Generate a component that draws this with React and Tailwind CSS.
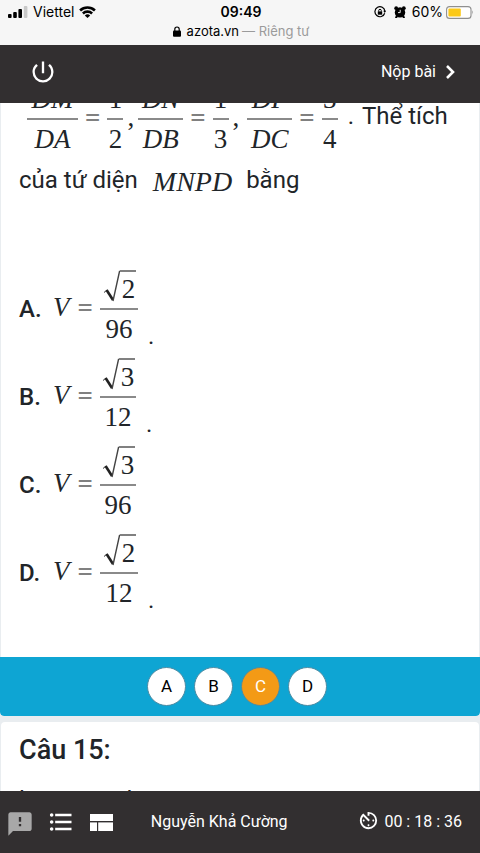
import { MdPowerSettingsNew, MdFeedback, MdFormatListBulleted, MdAvTimer } from "react-icons/md";

const SERIF = "font-['Liberation_Serif',serif] text-[27px] leading-[30px]";

const OPTIONS = [
  { id: "A", root: "2", den: "96", dot: true, width: "w-[38px]" },
  { id: "B", root: "3", den: "12", dot: true, width: "w-[36px]" },
  { id: "C", root: "3", den: "96", dot: false, width: "w-[36px]" },
  { id: "D", root: "2", den: "12", dot: true, width: "w-[38px]" },
];

function Fraction({ num, den, width, italic }) {
  return (
    <span className={`flex flex-col items-center ${SERIF} ${italic ? "italic" : ""} ${width}`}>
      <span className="flex h-[34px] items-end">{num}</span>
      <span className="my-1 h-0.5 w-full bg-[#8a8a8a]" />
      <span className="flex h-[34px] items-start">{den}</span>
    </span>
  );
}

function Equals() {
  return <span className={`pb-0.5 font-bold text-[#808080] ${SERIF}`}>=</span>;
}

function Comma() {
  return <span className={`ml-1 pb-1 ${SERIF}`}>,</span>;
}

function Ratio({ top, bottom, num, den, width }) {
  return (
    <span className="flex items-center gap-[7px]">
      <Fraction num={top} den={bottom} width={width} italic />
      <Equals />
      <Fraction num={num} den={den} width="w-4" />
    </span>
  );
}

function Root({ children }) {
  return (
    <span className="flex h-[34px] items-stretch pl-0.5">
      <svg className="h-[34px] w-4" viewBox="0 0 16 34" fill="none" aria-hidden="true">
        <path d="M0 22.5 L3 20" stroke="#333" strokeWidth="1" />
        <path d="M2.6 20 L9 30" stroke="#222" strokeWidth="2.6" />
        <path d="M9 31 L15.5 1.5 H16" stroke="#444" strokeWidth="1.4" />
      </svg>
      <span className="flex items-end border-t-2 border-[#808080] pr-px pl-0.5">{children}</span>
    </span>
  );
}

function StatusBar() {
  return (
    <div className="h-[45px] shrink-0 bg-[#f6f6f6] font-['Inter',sans-serif] text-sm leading-5 text-black">
      <div className="flex items-center justify-between pt-0.5 pr-1.5 pl-2">
        <div className="flex flex-1 items-center gap-[5px]">
          <svg className="h-3 w-5" viewBox="0 0 20 12" aria-hidden="true">
            <rect x="0" y="8" width="3.6" height="4" rx="1" />
            <rect x="5.2" y="6" width="3.6" height="6" rx="1" />
            <rect x="10.4" y="3" width="3.6" height="9" rx="1" />
            <rect x="15.8" y="0" width="3.6" height="12" rx="1" fill="#c8c8c8" />
          </svg>
          <span>Viettel</span>
          <svg className="h-3 w-[17px]" viewBox="0 0 17 12" aria-hidden="true">
            <path d="M0.2 3.6 A12 12 0 0 1 16.8 3.6 L15 5.5 A9.3 9.3 0 0 0 2 5.5 Z" />
            <path d="M3 6.5 A8 8 0 0 1 14 6.5 L12.2 8.4 A5.4 5.4 0 0 0 4.8 8.4 Z" />
            <path d="M5.8 9.4 A4 4 0 0 1 11.2 9.4 L8.5 12 Z" />
          </svg>
        </div>
        <span className="font-semibold">09:49</span>
        <div className="flex flex-1 items-center justify-end">
          <svg className="mr-2 size-3" viewBox="0 0 12 12" fill="none" stroke="#000" aria-hidden="true">
            <path d="M10.7 7.2 A5 5 0 1 1 10.9 5.2" strokeWidth="1.2" />
            <path d="M9.2 4.8 H12.2 L10.8 7 Z" fill="#000" stroke="none" />
            <rect x="3.8" y="5.4" width="4.4" height="3.3" fill="#000" stroke="none" />
            <path d="M4.7 5.6 V4.6 A1.3 1.3 0 0 1 7.3 4.6 V5.6" />
          </svg>
          <svg className="mr-1.5 size-3" viewBox="0 0 12 12" aria-hidden="true">
            <circle cx="6" cy="6.4" r="5.2" />
            <circle cx="2.2" cy="2.2" r="1.9" />
            <circle cx="9.8" cy="2.2" r="1.9" />
            <path d="M2 9 L1 12 H3 L4 10.6 Z M10 9 L11 12 H9 L8 10.6 Z" />
            <path d="M6.2 3.8 V6.6 H4" fill="none" stroke="#fff" strokeWidth="0.9" />
          </svg>
          <span className="mr-[3px]">60%</span>
          <svg className="h-[13px] w-7" viewBox="0 0 28 13" aria-hidden="true">
            <rect x="0.6" y="0.6" width="24.4" height="11.8" rx="3" fill="#fff" stroke="#8f8f8f" strokeWidth="1.1" />
            <rect x="2.4" y="2.4" width="12.4" height="8.2" rx="1" fill="#fbc918" />
            <path d="M26.2 4.3 Q28 6.5 26.2 8.7 Z" fill="#8f8f8f" />
          </svg>
        </div>
      </div>
      <div className="flex items-center justify-center pl-0.5 text-[13px] leading-[18px]">
        <svg className="mr-1.5 h-[11px] w-2" viewBox="0 0 8 11" aria-hidden="true">
          <rect x="0" y="4.6" width="8" height="6.2" rx="1" />
          <path d="M1.8 5 V3.2 A2.2 2.2 0 0 1 6.2 3.2 V5" fill="none" stroke="#000" strokeWidth="1.2" />
        </svg>
        <span>azota.vn</span>
        <span className="ml-[3px] text-[#9b9b9b]">— Riêng tư</span>
      </div>
    </div>
  );
}

function Header() {
  return (
    <header className="flex h-[58px] shrink-0 items-center justify-between bg-[#322f30] pr-6 pl-[29px] text-white">
      <button type="button" aria-label="Thoát" className="pb-1">
        <MdPowerSettingsNew className="size-7" />
      </button>
      <button type="button" className="flex items-center gap-2 pb-1 text-base">
        Nộp bài
        <svg className="h-3.5 w-3" viewBox="0 0 12 14" fill="none" stroke="#fff" strokeWidth="2.6" aria-hidden="true">
          <path d="M3 1 L9 7 L3 13" />
        </svg>
      </button>
    </header>
  );
}

function Footer() {
  return (
    <footer className="flex h-[62px] shrink-0 items-center justify-between bg-[#322f30] pr-[18px] pl-1.5 text-base text-white">
      <div className="flex items-center gap-[13px]">
        <button type="button" aria-label="Báo lỗi" className="pt-1">
          <MdFeedback className="size-7 text-[#a8a8a8]" />
        </button>
        <button type="button" aria-label="Danh sách câu hỏi">
          <MdFormatListBulleted className="size-7" />
        </button>
        <button type="button" aria-label="Bố cục" className="ml-0.5">
          <svg className="h-[17px] w-[23px]" viewBox="0 0 23 17" fill="#fff" aria-hidden="true">
            <rect width="23" height="7" />
            <rect y="8.4" width="7" height="8.6" />
            <rect x="8.2" y="8.4" width="14.8" height="8.6" />
          </svg>
        </button>
      </div>
      <span className="-ml-8">Nguyễn Khả Cường</span>
      <span className="flex items-center gap-1">
        <MdAvTimer className="mb-1 size-[23px]" />
        00 : 18 : 36
      </span>
    </footer>
  );
}

export default function App() {
  return (
    <div className="flex h-screen flex-col overflow-hidden bg-[#e9edf0] font-['Roboto',sans-serif] text-[#212529]">
      <StatusBar />
      <Header />
      <main className="min-h-0 flex-1 overflow-hidden">
        <section className="-mt-[23px] overflow-hidden rounded-b">
          <div className="mx-px bg-white px-[18px] pb-10 text-2xl">
            <div className="flex items-center pl-2">
              <Ratio top="DM" bottom="DA" num="1" den="2" width="w-[51px]" />
              <Comma />
              <span className="ml-1">
                <Ratio top="DN" bottom="DB" num="1" den="3" width="w-[45px]" />
              </span>
              <Comma />
              <span className="ml-2">
                <Ratio top="DP" bottom="DC" num="3" den="4" width="w-[45px]" />
              </span>
              <span className="ml-2.5 flex gap-2 pb-1.5 whitespace-nowrap">
                <span>.</span>
                <span>Thể tích</span>
              </span>
            </div>
            <div className="mt-1 flex h-9 items-center">
              <span>của tứ diện</span>
              <span className="mr-3.5 ml-[15px] pt-1 font-['Liberation_Serif',serif] text-[28px] leading-[30px] italic">
                MNPD
              </span>
              <span>bằng</span>
            </div>
            <div className="mt-[67px]">
              {OPTIONS.map((o) => (
                <div key={o.id} className="flex h-[88px] items-center">
                  <span className="w-[34px] font-medium">{o.id}.</span>
                  <span className={`mr-2 pb-1 italic ${SERIF}`}>V</span>
                  <Equals />
                  <span className="ml-[7px]">
                    <Fraction num={<Root>{o.root}</Root>} den={o.den} width={o.width} />
                  </span>
                  {o.dot && <span className="mb-0.5 ml-2.5 self-end leading-[30px]">.</span>}
                </div>
              ))}
            </div>
          </div>
          <div className="flex h-[59px] items-center justify-center gap-2 rounded-b bg-[#0ea5d3] pr-1.5">
            {OPTIONS.map((o) => (
              <button
                key={o.id}
                type="button"
                aria-pressed={o.id === "C"}
                className={`size-[39px] rounded-full border border-[#4c8ba3] text-[17px] ${
                  o.id === "C" ? "bg-[#f39a16] text-white" : "bg-white text-black"
                }`}
              >
                {o.id}
              </button>
            ))}
          </div>
        </section>
        <section className="mx-px mt-1.5 rounded bg-white px-[18px] pt-3 pb-10">
          <h2 className="text-[27px] leading-8 font-medium">Câu 15:</h2>
          <p className="mt-4 text-2xl leading-9">lượng toa lưu ra</p>
        </section>
      </main>
      <Footer />
    </div>
  );
}
